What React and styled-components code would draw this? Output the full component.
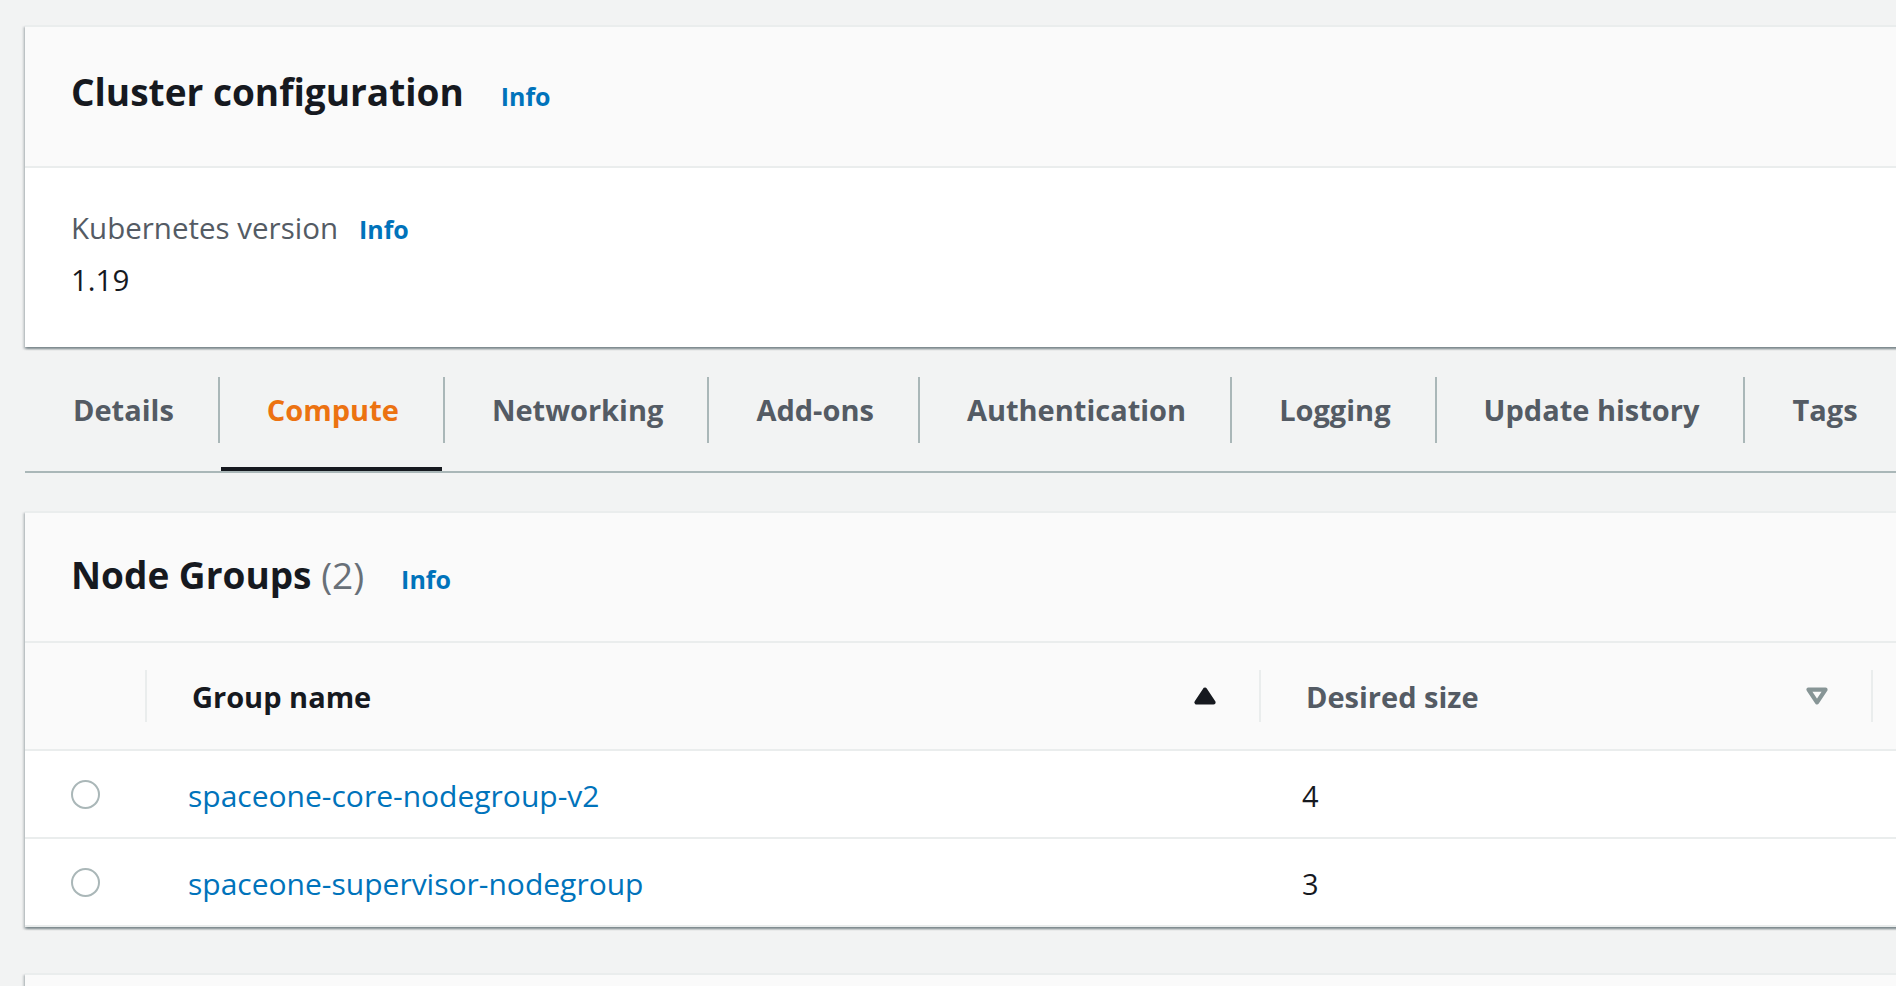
import React from 'react';
import styled, { createGlobalStyle } from 'styled-components';

const GlobalStyle = createGlobalStyle`
  html, body {
    margin: 0;
    padding: 0;
    background: #f2f3f3;
    overflow: hidden;
  }
  body {
    font-family: "Open Sans", "Noto Sans", sans-serif;
    color: #16191f;
  }
`;

const tabs = ['Details', 'Compute', 'Networking', 'Add-ons', 'Authentication', 'Logging', 'Update history', 'Tags'];

const nodeGroups = [
  { name: 'spaceone-core-nodegroup-v2', size: 4 },
  { name: 'spaceone-supervisor-nodegroup', size: 3 },
];

const SortAsc = () => (
  <svg width="34" height="34" viewBox="0 0 16 16">
    <path d="M4 11h8L8 5l-4 6z" fill="#16191f" stroke="#16191f" strokeWidth="2" strokeLinejoin="round" />
  </svg>
);

const SortNone = () => (
  <svg width="34" height="34" viewBox="0 0 16 16">
    <path d="M4 5h8l-4 6-4-6z" fill="none" stroke="#879596" strokeWidth="2" strokeLinejoin="round" />
  </svg>
);

const App = () => {
  return (
    <>
      <GlobalStyle />
      <Page>
        <Card>
          <CardHeader $top={42} $bottom={51}>
            <Title>Cluster configuration</Title>
            <InfoLink>Info</InfoLink>
          </CardHeader>
          <CardBody>
            <Label>
              Kubernetes version
              <InfoLink $small>Info</InfoLink>
            </Label>
            <Value>1.19</Value>
          </CardBody>
        </Card>

        <TabBar>
          {tabs.map((t, i) => (
            <Tab key={t} $active={t === 'Compute'}>
              <TabLabel $first={i === 0}>{t}</TabLabel>
            </Tab>
          ))}
        </TabBar>

        <Card $gapTop={38}>
          <CardHeader $top={39} $bottom={44}>
            <Title>
              Node Groups <Count>(2)</Count>
            </Title>
            <InfoLink>Info</InfoLink>
          </CardHeader>
          <Table>
            <HeadRow>
              <HeadCell />
              <HeadCell>
                <HeadInner>
                  <HeadText $sorted>Group name</HeadText>
                  <SortAsc />
                </HeadInner>
              </HeadCell>
              <HeadCell>
                <HeadInner>
                  <HeadText>Desired size</HeadText>
                  <SortNone />
                </HeadInner>
              </HeadCell>
              <HeadCell>
                <HeadInner>
                  <HeadText>AMI release version</HeadText>
                  <SortNone />
                </HeadInner>
              </HeadCell>
            </HeadRow>
            {nodeGroups.map((g) => (
              <Row key={g.name}>
                <RadioCell>
                  <Radio />
                </RadioCell>
                <Cell>
                  <Link>{g.name}</Link>
                </Cell>
                <Cell>{g.size}</Cell>
                <Cell />
              </Row>
            ))}
          </Table>
        </Card>

        <Card $gapTop={46}>
          <CardHeader $top={39} $bottom={44}>
            <Title>
              Fargate Profiles <Count>(0)</Count>
            </Title>
            <InfoLink>Info</InfoLink>
          </CardHeader>
        </Card>
      </Page>
    </>
  );
};

const Page = styled.div`
  width: 2100px;
  padding: 25px 0 0 25px;
`;

const Card = styled.section`
  background: #fff;
  border-top: 2px solid #eaeded;
  margin-top: ${(p) => p.$gapTop || 0}px;
  box-shadow: 0 2px 2px 0 rgba(0, 28, 36, 0.3), 2px 2px 2px 0 rgba(0, 28, 36, 0.15),
    -2px 2px 2px 0 rgba(0, 28, 36, 0.15);
`;

const CardHeader = styled.div`
  display: flex;
  align-items: baseline;
  background: #fafafa;
  border-bottom: 2px solid #eaeded;
  padding: ${(p) => p.$top}px 46px ${(p) => p.$bottom}px;
`;

const Title = styled.h2`
  margin: 0;
  font-size: 37px;
  line-height: 1.23;
  font-weight: 700;
  color: #16191f;
`;

const Count = styled.span`
  font-weight: 400;
  color: #687078;
`;

const InfoLink = styled.a`
  margin-left: ${(p) => (p.$small ? 21 : 37)}px;
  font-size: 25px;
  font-weight: 700;
  color: #0073bb;
  text-decoration: none;
`;

const CardBody = styled.div`
  padding: 40px 46px 46px;
`;

const Label = styled.div`
  display: flex;
  align-items: baseline;
  font-size: 29.5px;
  line-height: 1.38;
  color: #545b64;
`;

const Value = styled.div`
  margin-top: 12px;
  font-size: 29.5px;
  line-height: 1.38;
  color: #16191f;
`;

const TabBar = styled.nav`
  display: flex;
  border-bottom: 2px solid #aab7b8;
`;

const Tab = styled.div`
  position: relative;
  padding: 30px 0 28px;
  font-size: 29px;
  font-weight: 700;
  color: ${(p) => (p.$active ? '#ec7211' : '#545b64')};
  cursor: pointer;

  &::after {
    content: '';
    display: ${(p) => (p.$active ? 'block' : 'none')};
    position: absolute;
    left: 3px;
    right: 1px;
    bottom: 0;
    height: 4px;
    background: #16191f;
  }
`;

const TabLabel = styled.div`
  display: flex;
  align-items: center;
  height: 66px;
  padding: 0 44px 0 ${(p) => (p.$first ? 48 : 47)}px;
  border-left: ${(p) => (p.$first ? 'none' : '2px solid #aab7b8')};
  white-space: nowrap;
`;

const Table = styled.div`
  display: flex;
  flex-direction: column;
`;

const HeadRow = styled.div`
  display: grid;
  grid-template-columns: 120px 1114px 612px 1fr;
  height: 106px;
  background: #fafafa;
  border-bottom: 2px solid #eaeded;
`;

const HeadCell = styled.div`
  display: flex;
  align-items: center;
`;

const HeadInner = styled.div`
  flex: 1;
  display: flex;
  align-items: center;
  justify-content: space-between;
  height: 52px;
  border-left: 2px solid #eaeded;
  padding: 0 37px 0 45px;
`;

const HeadText = styled.span`
  font-size: 29px;
  font-weight: 700;
  color: ${(p) => (p.$sorted ? '#16191f' : '#545b64')};
  white-space: nowrap;
`;

const Row = styled.div`
  display: grid;
  grid-template-columns: 120px 1114px 612px 1fr;
  height: 86px;
  border-bottom: 2px solid #eaeded;
  background: #fff;
`;

const RadioCell = styled.div`
  display: flex;
  align-items: center;
  justify-content: center;
`;

const Radio = styled.span`
  box-sizing: border-box;
  width: 29px;
  height: 29px;
  border-radius: 50%;
  border: 2px solid #aab7b8;
  background: #fff;
`;

const Cell = styled.div`
  display: flex;
  align-items: center;
  padding-left: 43px;
  padding-top: 3px;
  font-size: 29px;
  color: #16191f;
`;

const Link = styled.a`
  color: #0073bb;
  text-decoration: none;
  font-size: 30px;
`;

export default App;
